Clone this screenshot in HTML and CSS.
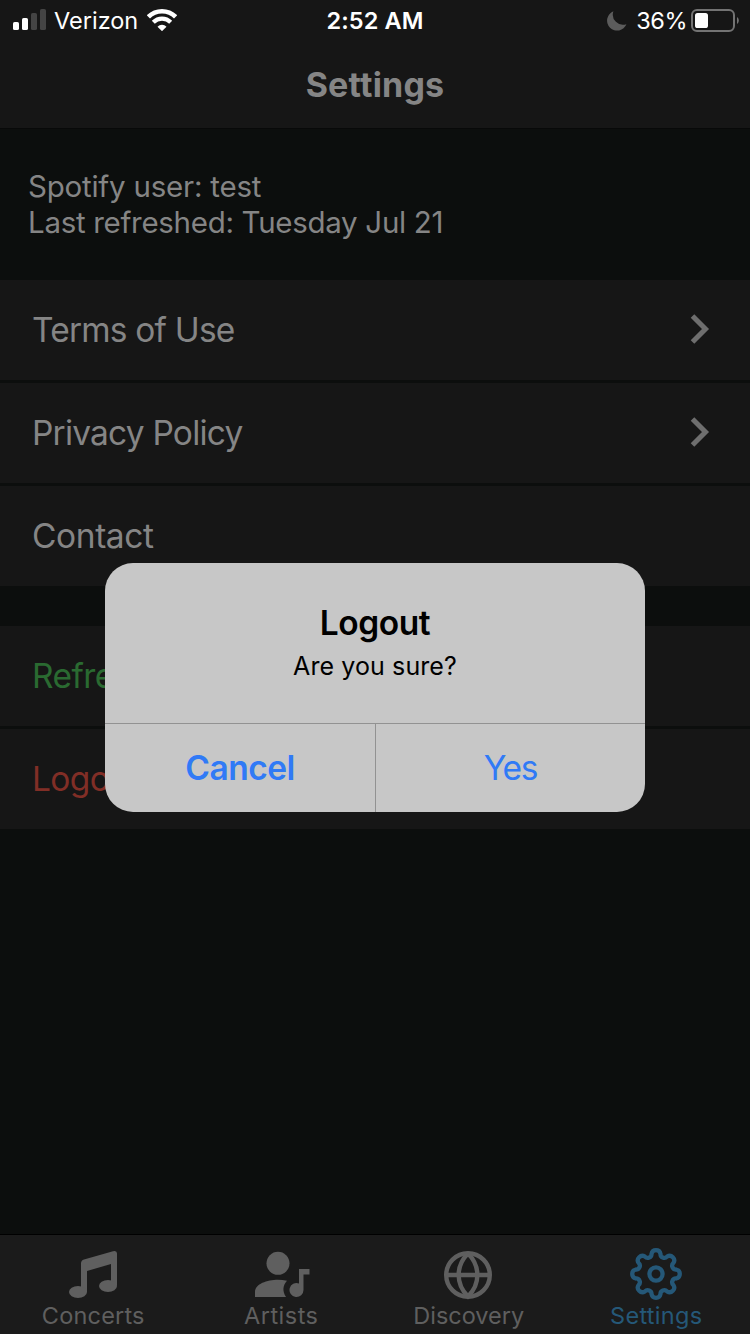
FILE: index.html
```html
<!DOCTYPE html>
<html lang="en">
<head>
<meta charset="utf-8">
<title>Settings</title>
<link rel="stylesheet" href="styles.css">
</head>
<body>
<div class="screen">
  <header class="header">
    <div class="status">
      <div class="status-left">
        <svg class="signal" width="34" height="22" viewBox="0 0 34 22"><rect x="0" y="13" width="6" height="8" rx="1.6" fill="#fff"/><rect x="9" y="9" width="6" height="12" rx="1.6" fill="#fff"/><rect x="18" y="4" width="6" height="17" rx="1.6" fill="#444"/><rect x="27" y="0" width="6" height="21" rx="1.6" fill="#444"/></svg>
        <span class="carrier">Verizon</span>
        <svg class="wifi" width="30" height="22" viewBox="0 0 30 22" fill="none" stroke="#fff"><path d="M1.400 7.900a19.200 19.200 0 0 1 27.200 0" stroke-width="4.500"/><path d="M6.300 13.200a12.300 12.300 0 0 1 17.400 0" stroke-width="4.200"/><path d="M15 22.200l-4.500-4.500a6.300 6.300 0 0 1 9 0z" fill="#fff" stroke="none"/></svg>
      </div>
      <span class="time">2:52 AM</span>
      <div class="status-right">
        <svg class="moon" width="20" height="20" viewBox="0 0 20 20"><path d="M6.400.3A10 10 0 1 0 19.400 13.200 10.200 10.200 0 0 1 6.400.3z" fill="#5c5c5c"/></svg>
        <span class="percent">36%</span>
        <svg class="battery" width="48" height="23" viewBox="0 0 48 23"><rect x="1" y="1" width="42" height="21" rx="5" fill="none" stroke="#737373" stroke-width="2"/><rect x="4" y="4" width="13" height="15" rx="2.600" fill="#fff"/><path d="M46 8c2.400 1.500 2.400 5.500 0 7z" fill="#737373"/></svg>
      </div>
    </div>
    <h1 class="title">Settings</h1>
  </header>

  <main class="content">
    <div class="account">
      <div class="user">Spotify user: test</div>
      <div class="refreshed">Last refreshed: Tuesday Jul 21</div>
    </div>
    <div class="group">
      <div class="row"><span class="terms">Terms of Use</span><svg class="chevron" width="20" height="30" viewBox="0 0 20 30"><path d="M2.500 2L15.500 15 2.500 28" fill="none" stroke="#6e6e6e" stroke-width="5"/></svg></div>
      <div class="row"><span class="privacy">Privacy Policy</span><svg class="chevron" width="20" height="30" viewBox="0 0 20 30"><path d="M2.500 2L15.500 15 2.500 28" fill="none" stroke="#6e6e6e" stroke-width="5"/></svg></div>
      <div class="row"><span class="contact">Contact</span></div>
    </div>
    <div class="group">
      <div class="row refresh">Refresh Data</div>
      <div class="row logout">Logout</div>
    </div>
  </main>

  <nav class="tabs">
    <div class="tab">
      <svg class="i-music" width="52" height="52" viewBox="0 0 52 52" fill="#5f5f5f"><path d="M14 13.500Q14 10.500 17 9.600L46 1.200Q50 .2 50 3.500V35.500H44V14L20 21V42H14z"/><ellipse cx="11" cy="42" rx="9" ry="6"/><ellipse cx="41" cy="36" rx="9" ry="6"/></svg>
      <span class="t-concerts">Concerts</span>
    </div>
    <div class="tab">
      <svg class="i-artist" width="56" height="52" viewBox="0 0 56 52" fill="#5f5f5f"><circle cx="24" cy="13.300" r="11.500"/><path d="M1 47V42C1 34 13 29.800 24 29.800Q28.500 29.800 33 30.800C29 35 28 41 32 47z"/><path d="M45 19H55.500V24.500H49.500V40A7 7 0 1 1 45 33.500z"/></svg>
      <span class="t-artists">Artists</span>
    </div>
    <div class="tab">
      <svg class="i-globe" width="52" height="52" viewBox="0 0 52 52" fill="none" stroke="#5f5f5f" stroke-width="4.400"><circle cx="26" cy="25" r="21.800"/><path d="M4 25H48M26 3.500C13.500 16 13.500 34 26 46.500C38.500 34 38.500 16 26 3.500"/></svg>
      <span class="t-discovery">Discovery</span>
    </div>
    <div class="tab active">
      <svg width="54" height="52" viewBox="-27 -27 54 52" fill="none" stroke="#255878" stroke-width="4.100" stroke-linejoin="round" overflow="visible"><g transform="translate(0 -3) scale(1.045)"><path d="M-4.300-19.300A4.400 4.400 0 0 1 4.300-19.300A3.600 3.600 0 0 0 10.610-16.690A4.400 4.400 0 0 1 16.690-10.610A3.600 3.600 0 0 0 19.300-4.300A4.400 4.400 0 0 1 19.300 4.300A3.600 3.600 0 0 0 16.690 10.610A4.400 4.400 0 0 1 10.610 16.690A3.600 3.600 0 0 0 4.300 19.300A4.400 4.400 0 0 1-4.300 19.300A3.600 3.600 0 0 0-10.610 16.690A4.400 4.400 0 0 1-16.690 10.610A3.600 3.600 0 0 0-19.300 4.300A4.400 4.400 0 0 1-19.300-4.300A3.600 3.600 0 0 0-16.690-10.610A4.400 4.400 0 0 1-10.610-16.690A3.600 3.600 0 0 0-4.300-19.300z"/><circle r="6.300"/></g></svg>
      <span class="t-settings">Settings</span>
    </div>
  </nav>

  <div class="dialog" role="alertdialog">
    <div class="dialog-body">
      <div class="dialog-title">Logout</div>
      <div class="dialog-text">Are you sure?</div>
    </div>
    <div class="dialog-actions">
      <div class="action cancel">Cancel</div>
      <div class="action yes">Yes</div>
    </div>
  </div>
</div>
</body>
</html>
```
FILE: styles.css
```css
* { box-sizing: border-box; }
body { margin: 0; background: #0c0e0d; font-family: Inter, "Liberation Sans", sans-serif; }
svg { display: block; flex: none; }
.screen { position: relative; width: 750px; height: 1334px; display: flex; flex-direction: column; overflow: hidden; background: #0c0e0d; color: #858585; white-space: nowrap; }

.header { height: 129px; flex: none; background: #161616; border-bottom: 1px solid #080909; }
.status { height: 40px; display: grid; grid-template-columns: 1fr auto 1fr; align-items: center; padding: 0 11px 0 13px; font-size: 23.5px; line-height: 40px; color: #fff; }
.status-left, .status-right { display: flex; align-items: center; height: 40px; padding-top: 1px; }
.status-right { justify-content: flex-end; }
.signal { margin: -2px 7px 0 0; }
.wifi { margin: -2px 0 0 9px; }
.time { font-weight: 600; letter-spacing: 0.1px; padding-top: 1px; margin-right: 2px; }
.moon { margin-right: 9px; }
.percent { letter-spacing: -0.5px; margin-right: 4px; }
.battery { margin-top: -2px; }
.title { margin: 0; text-align: center; font-size: 34px; font-weight: 650; line-height: 89px; letter-spacing: 0.2px; }

.content { flex: 1; }
.account { height: 151px; padding: 39px 28px 0; font-size: 29.5px; line-height: 36px; }
.user { letter-spacing: -0.22px; }
.refreshed { letter-spacing: -0.3px; }
.group { display: flex; flex-direction: column; gap: 3px; margin-bottom: 40px; }
.row { height: 100px; display: flex; justify-content: space-between; align-items: center; padding: 0 40px 0 32px; background: #161616; font-size: 33.5px; letter-spacing: -0.6px; }
.terms { letter-spacing: -0.8px; }
.privacy { letter-spacing: -0.8px; }
.contact { letter-spacing: -0.4px; }
.chevron { margin-top: -3px; }
.refresh { color: #2a6a31; }
.logout { color: #812e26; }

.tabs { height: 100px; flex: none; display: grid; grid-template-columns: repeat(4, 1fr); background: #1b1b1b; border-top: 1px solid #000; color: #5f5f5f; }
.tab { display: flex; flex-direction: column; align-items: center; padding-top: 15px; font-size: 23.5px; line-height: 28px; }
.i-music, .i-globe { margin-right: 2px; }
.i-artist { margin-left: 2px; }
.t-concerts { letter-spacing: 0.2px; margin-right: 1px; }
.t-artists { letter-spacing: 0.5px; }
.t-settings { letter-spacing: 0.3px; }
.active { color: #255878; }

.dialog { position: absolute; left: 105px; top: 563px; width: 540px; height: 249px; border-radius: 28px; overflow: hidden; background: #c7c7c7; color: #000; text-align: center; }
.dialog-body { height: 161px; padding-top: 40px; border-bottom: 1px solid #929292; }
.dialog-title { font-size: 33.5px; font-weight: 600; line-height: 40px; letter-spacing: -0.45px; }
.dialog-text { margin-top: 7px; font-size: 25px; line-height: 32px; letter-spacing: 0.1px; }
.dialog-actions { display: grid; grid-template-columns: 271px 269px; height: 88px; }
.action { font-size: 33.5px; line-height: 88px; color: #307af6; letter-spacing: -0.5px; }
.yes { letter-spacing: -1.3px; }
.cancel { font-weight: 600; border-right: 1px solid #929292; }
```
